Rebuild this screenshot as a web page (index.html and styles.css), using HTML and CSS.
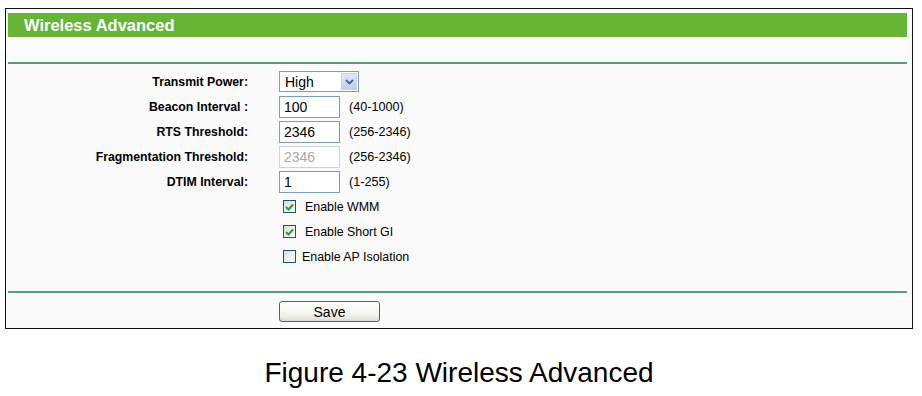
FILE: index.html
```html
<!DOCTYPE html>
<html lang="en">
<head>
    <meta charset="UTF-8">
    <title>Wireless Advanced</title>
    <link rel="stylesheet" href="styles.css">
</head>
<body>

<div class="panel">
    <div class="panel__title">Wireless Advanced</div>
    <div class="panel__band"></div>

    <form class="settings" onsubmit="return false;">
        <!-- Campos numericos -->
        <div class="row">
            <label class="row__label">Transmit Power:</label>
            <div class="row__ctrl">
                <div class="select">
                    <span class="select__value">High</span>
                    <span class="select__arrow">
                        <svg width="9" height="6" viewBox="0 0 9 6"><path d="M1 1 L4.5 4.5 L8 1" fill="none" stroke="#4d6185" stroke-width="1.8"/></svg>
                    </span>
                </div>
            </div>
        </div>
        <div class="row">
            <label class="row__label">Beacon Interval :</label>
            <div class="row__ctrl">
                <input class="field" type="text" value="100">
                <span class="hint">(40-1000)</span>
            </div>
        </div>
        <div class="row">
            <label class="row__label">RTS Threshold:</label>
            <div class="row__ctrl">
                <input class="field" type="text" value="2346">
                <span class="hint">(256-2346)</span>
            </div>
        </div>
        <div class="row">
            <label class="row__label">Fragmentation Threshold:</label>
            <div class="row__ctrl">
                <input class="field field--off" type="text" value="2346" disabled>
                <span class="hint">(256-2346)</span>
            </div>
        </div>
        <div class="row">
            <label class="row__label">DTIM Interval:</label>
            <div class="row__ctrl">
                <input class="field" type="text" value="1">
                <span class="hint">(1-255)</span>
            </div>
        </div>

        <!-- Opciones -->
        <div class="row">
            <span class="row__label"></span>
            <div class="row__ctrl">
                <span class="check check--on">
                    <svg width="9" height="8" viewBox="0 0 9 8"><path d="M1 4 L3.5 6.5 L8 1.5" fill="none" stroke="#21a121" stroke-width="2"/></svg>
                </span>
                <span class="check__text">Enable WMM</span>
            </div>
        </div>
        <div class="row">
            <span class="row__label"></span>
            <div class="row__ctrl">
                <span class="check check--on">
                    <svg width="9" height="8" viewBox="0 0 9 8"><path d="M1 4 L3.5 6.5 L8 1.5" fill="none" stroke="#21a121" stroke-width="2"/></svg>
                </span>
                <span class="check__text">Enable Short GI</span>
            </div>
        </div>
        <div class="row">
            <span class="row__label"></span>
            <div class="row__ctrl">
                <span class="check"></span>
                <span class="check__text check__text--tight">Enable AP Isolation</span>
            </div>
        </div>
    </form>

    <div class="actions">
        <span class="row__label"></span>
        <div class="row__ctrl">
            <button type="button" class="button">Save</button>
        </div>
    </div>
</div>

<p class="caption">Figure 4-23 Wireless Advanced</p>

</body>
</html>
```

FILE: styles.css
```css
/* Pagina */
body { margin: 0; background: #fff; font-family: "Liberation Sans", Arial, sans-serif; color: #000; }

/* Marco del panel */
.panel { margin: 8px 0 0 5px; width: 908px; box-sizing: border-box; border: 1px solid #111; padding: 4px 5px 6px 2px; background: #fafafa; }
.panel__title { height: 24px; line-height: 24px; padding-left: 16px; background: #66b535; color: #fff; font-size: 16.5px; font-weight: bold; }
.panel__band { height: 25px; background: #fcfcfc; border-bottom: 2px solid #559f7c; }

/* Filas del formulario */
.settings { padding-top: 5px; padding-bottom: 22px; border-bottom: 2px solid #559f7c; }
.row, .actions { display: grid; grid-template-columns: 240px 1fr; column-gap: 31px; height: 25px; align-items: center; }
.row__label { text-align: right; font-size: 12.3px; font-weight: bold; }
.row__ctrl { display: flex; align-items: center; }

.field { width: 61px; height: 22px; box-sizing: border-box; border: 1px solid #7f9db9; padding: 0 4px; margin: 0; font: 14px "Liberation Sans", Arial, sans-serif; background: #fff; color: #000; }
.field--off { color: #a8a8a8; border-color: #c9d5e2; background: #fff; }
.hint { margin-left: 9px; font-size: 12.6px; }

.select { width: 80px; height: 21px; box-sizing: border-box; border: 1px solid #7f9db9; background: #fff; display: flex; align-items: center; justify-content: space-between; padding: 1px; }
.select__value { padding-left: 4px; font-size: 14px; }
.select__arrow { width: 16px; height: 17px; display: flex; align-items: center; justify-content: center; background: linear-gradient(#dde7fc, #bcd0f8); border: 1px solid #c3d3f5; box-sizing: border-box; }

/* Casillas */
.check { width: 13px; height: 13px; box-sizing: border-box; margin-left: 4px; border: 1px solid #1c5180; background: linear-gradient(135deg, #dcdcd6, #fff); display: flex; align-items: center; justify-content: center; }
.check__text { margin-left: 9px; font-size: 12.4px; }
.check__text--tight { margin-left: 6px; }

/* Boton */
.actions { height: 21px; padding-top: 8px; }
.button { width: 101px; height: 21px; padding: 0; border: 1px solid #3c64a0; border-radius: 3px; background: linear-gradient(#fff, #f2f1ec 70%, #dcdad2); font: 14px "Liberation Sans", Arial, sans-serif; color: #000; }

/* Pie de figura */
.caption { margin: 28px 0 0 5px; width: 908px; text-align: center; font-size: 28px; line-height: 32px; }
```
